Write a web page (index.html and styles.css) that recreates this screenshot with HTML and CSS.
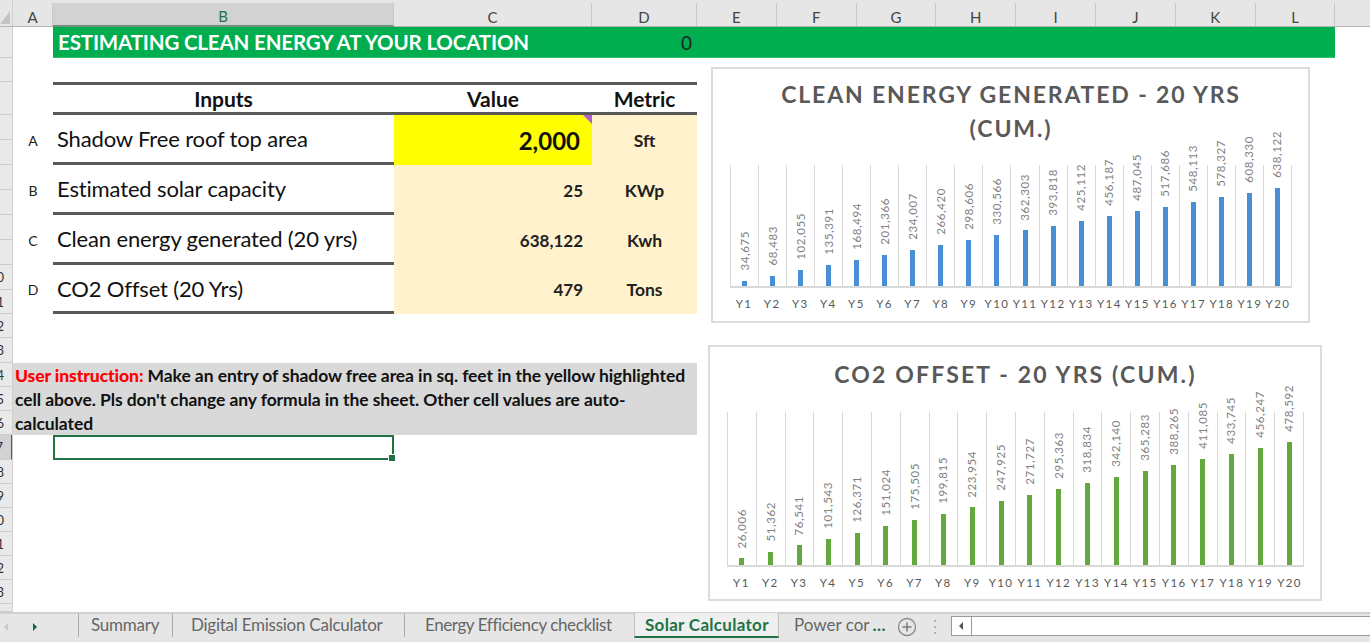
FILE: index.html
```html
<!DOCTYPE html>
<html lang="en">
<head>
<meta charset="utf-8">
<title>Solar Calculator</title>
<link rel="stylesheet" href="styles.css">
</head>
<body>
<div class="app">
  <div class="colhead">
    <div class="corner"><svg width="13" height="27" viewBox="0 0 13 27"><path d="M0 24H10V11Z" fill="#c4c4c4"/></svg></div>
    <div class="col a">A</div><div class="col b active">B</div><div class="col c">C</div><div class="col d">D</div>
    <div class="col e">E</div><div class="col e">F</div><div class="col e">G</div><div class="col e">H</div>
    <div class="col e">I</div><div class="col e">J</div><div class="col e">K</div><div class="col e">L</div><div class="col rest"></div>
  </div>
  <div class="body">
    <div class="gutter">
      <div class="rw h31"></div><div class="rw h24"></div><div class="rw h33"></div>
      <div class="rw h25"></div><div class="rw h25"></div><div class="rw h25"></div><div class="rw h25"></div><div class="rw h25"></div><div class="rw h25"></div>
      <div class="rw h25"><span>10</span></div><div class="rw h24"><span>11</span></div><div class="rw h24"><span>12</span></div><div class="rw h25"><span>13</span></div>
      <div class="rw h24"><span>14</span></div><div class="rw h24"><span>15</span></div><div class="rw h24"><span>16</span></div><div class="rw h25 sel"><span>17</span></div>
      <div class="rw h24"><span>18</span></div><div class="rw h24"><span>19</span></div><div class="rw h24"><span>20</span></div><div class="rw h24"><span>21</span></div><div class="rw h24"><span>22</span></div><div class="rw h24"><span>23</span></div>
      <div class="rw h8"></div>
    </div>
    <div class="sheet">
      <div class="banner"><span>ESTIMATING CLEAN ENERGY AT YOUR LOCATION</span><span class="zero">0</span></div>
      <div class="table">
        <div class="th first">Inputs</div><div class="th">Value</div><div class="th">Metric</div>
        <div class="key">A</div><div class="lbl">Shadow Free roof top area</div><div class="val input">2,000</div><div class="met">Sft</div>
        <div class="key">B</div><div class="lbl">Estimated solar capacity</div><div class="val">25</div><div class="met">KWp</div>
        <div class="key">C</div><div class="lbl">Clean energy generated (20 yrs)</div><div class="val">638,122</div><div class="met">Kwh</div>
        <div class="key">D</div><div class="lbl">CO2 Offset (20 Yrs)</div><div class="val">479</div><div class="met">Tons</div>
      </div>
      <div class="note"><b class="red">User instruction:</b> Make an entry of shadow free area in sq. feet in the yellow highlighted<br>cell above. Pls don't change any formula in the sheet. Other cell values are auto-<br>calculated</div>
      <div class="cursor"></div>

      <section class="chart one">
        <h2>CLEAN ENERGY GENERATED - 20 YRS<br>(CUM.)</h2>
        <div class="plot">
          <div class="cat"><i>34,675</i><u style="height:5.3px"></u></div><div class="cat"><i>68,483</i><u style="height:10.5px"></u></div><div class="cat"><i>102,055</i><u style="height:15.7px"></u></div><div class="cat"><i>135,391</i><u style="height:20.8px"></u></div><div class="cat"><i>168,494</i><u style="height:25.9px"></u></div>
          <div class="cat"><i>201,366</i><u style="height:30.9px"></u></div><div class="cat"><i>234,007</i><u style="height:35.9px"></u></div><div class="cat"><i>266,420</i><u style="height:40.9px"></u></div><div class="cat"><i>298,606</i><u style="height:45.9px"></u></div><div class="cat"><i>330,566</i><u style="height:50.8px"></u></div>
          <div class="cat"><i>362,303</i><u style="height:55.6px"></u></div><div class="cat"><i>393,818</i><u style="height:60.5px"></u></div><div class="cat"><i>425,112</i><u style="height:65.3px"></u></div><div class="cat"><i>456,187</i><u style="height:70.1px"></u></div><div class="cat"><i>487,045</i><u style="height:74.8px"></u></div>
          <div class="cat"><i>517,686</i><u style="height:79.5px"></u></div><div class="cat"><i>548,113</i><u style="height:84.2px"></u></div><div class="cat"><i>578,327</i><u style="height:88.8px"></u></div><div class="cat"><i>608,330</i><u style="height:93.4px"></u></div><div class="cat"><i>638,122</i><u style="height:98px"></u></div>
        </div>
        <div class="xaxis"><span>Y1</span><span>Y2</span><span>Y3</span><span>Y4</span><span>Y5</span><span>Y6</span><span>Y7</span><span>Y8</span><span>Y9</span><span>Y10</span><span>Y11</span><span>Y12</span><span>Y13</span><span>Y14</span><span>Y15</span><span>Y16</span><span>Y17</span><span>Y18</span><span>Y19</span><span>Y20</span></div>
      </section>

      <section class="chart two">
        <h2>CO2 OFFSET - 20 YRS (CUM.)</h2>
        <div class="plot">
          <div class="cat"><i>26,006</i><u style="height:6.7px"></u></div><div class="cat"><i>51,362</i><u style="height:13.2px"></u></div><div class="cat"><i>76,541</i><u style="height:19.7px"></u></div><div class="cat"><i>101,543</i><u style="height:26.1px"></u></div><div class="cat"><i>126,371</i><u style="height:32.5px"></u></div>
          <div class="cat"><i>151,024</i><u style="height:38.8px"></u></div><div class="cat"><i>175,505</i><u style="height:45.1px"></u></div><div class="cat"><i>199,815</i><u style="height:51.4px"></u></div><div class="cat"><i>223,954</i><u style="height:57.6px"></u></div><div class="cat"><i>247,925</i><u style="height:63.7px"></u></div>
          <div class="cat"><i>271,727</i><u style="height:69.8px"></u></div><div class="cat"><i>295,363</i><u style="height:75.9px"></u></div><div class="cat"><i>318,834</i><u style="height:81.9px"></u></div><div class="cat"><i>342,140</i><u style="height:87.9px"></u></div><div class="cat"><i>365,283</i><u style="height:93.9px"></u></div>
          <div class="cat"><i>388,265</i><u style="height:99.8px"></u></div><div class="cat"><i>411,085</i><u style="height:105.7px"></u></div><div class="cat"><i>433,745</i><u style="height:111.5px"></u></div><div class="cat"><i>456,247</i><u style="height:117.3px"></u></div><div class="cat"><i>478,592</i><u style="height:123px"></u></div>
        </div>
        <div class="xaxis"><span>Y1</span><span>Y2</span><span>Y3</span><span>Y4</span><span>Y5</span><span>Y6</span><span>Y7</span><span>Y8</span><span>Y9</span><span>Y10</span><span>Y11</span><span>Y12</span><span>Y13</span><span>Y14</span><span>Y15</span><span>Y16</span><span>Y17</span><span>Y18</span><span>Y19</span><span>Y20</span></div>
      </section>
    </div>
  </div>
  <div class="tabs">
    <div class="nav">
      <svg class="arrow" width="6" height="10" viewBox="0 0 6 10"><path d="M5 1V9L1 5Z" fill="#c8c8c8"/></svg>
      <svg class="arrow" width="6" height="10" viewBox="0 0 6 10"><path d="M1 1V9L5 5Z" fill="#0f6b3a"/></svg>
    </div>
    <div class="tab t1">Summary</div>
    <div class="tab t2">Digital Emission Calculator</div>
    <div class="tab t3">Energy Efficiency checklist</div>
    <div class="tab current">Solar Calculator</div>
    <div class="tab t5">Power cor <b>...</b></div>
    <svg class="plus" width="20" height="20" viewBox="0 0 20 20"><circle cx="10" cy="10" r="8.5" fill="none" stroke="#8a8a8a" stroke-width="1.3"/><path d="M10 5.5V14.5M5.500 10H14.500" stroke="#7a7a7a" stroke-width="1.500"/></svg>
    <svg class="dots" width="4" height="16" viewBox="0 0 4 16"><path d="M2 1V3M2 7V9M2 13V15" stroke="#b0b0b0" stroke-width="2"/></svg>
    <div class="scroll">
      <div class="scrollbtn"><svg width="5" height="8" viewBox="0 0 5 8"><path d="M4 0V8L0 4Z" fill="#555"/></svg></div>
    </div>
  </div>
</div>
</body>
</html>
```

FILE: styles.css
```css
* { box-sizing: border-box; }
html, body { margin: 0; padding: 0; }
body { background: #fff; font-family: Lato, "Liberation Sans", sans-serif; overflow: hidden; }
.app { width: 1370px; height: 642px; display: flex; flex-direction: column; overflow: hidden; }

.colhead { height: 27px; flex: none; display: flex; background: #e6e6e6; border-bottom: 1px solid #b4b4b4; padding-top: 3px; }
.corner { width: 13px; margin-top: -3px; border-right: 1px solid #d0d0d0; }
.col { display: flex; align-items: center; justify-content: center; padding-top: 4px; font-size: 15px; color: #444; border-right: 1px solid #c8c8c8; }
.col.a { width: 40px; }
.col.b { width: 341px; }
.col.c { width: 198px; }
.col.d { width: 105px; }
.col.e { width: 79.800px; }
.col.rest { flex: 1; border: 0; }
.col.active { background: #d2d2d2; color: #217346; border-bottom: 2px solid #6f8f7f; margin-bottom: -1px; }

.body { flex: 1; min-height: 0; display: flex; }
.gutter { width: 13px; flex: none; background: #e9e9e9; border-right: 1px solid #cfcfcf; overflow: hidden; }
.rw { display: flex; align-items: center; justify-content: flex-end; padding-right: 8px; border-bottom: 1px solid #cdcdcd; font-size: 13px; color: #333; white-space: nowrap; }
.rw span { flex: none; }
.rw.sel { background: #d2d2d2; border-right: 2px solid #217346; margin-right: -1px; }
.h8 { height: 8px; } .h24 { height: 24px; } .h25 { height: 25px; } .h31 { height: 31px; } .h33 { height: 33px; }

.sheet { position: relative; flex: 1; min-width: 0; }
.banner { margin-left: 40px; width: 1282px; height: 31px; background: #00ae50; display: flex; align-items: center; justify-content: space-between; padding: 0 643px 0 5px; color: #fff; font-weight: 700; font-size: 20.500px; letter-spacing: -0.15px; border-bottom: 1px solid #2bc46e; }
.zero { color: #222; font-weight: 400; font-size: 19px; letter-spacing: 0; }

.table { margin: 24px 0 0 0; display: grid; grid-template-columns: 40px 341px 198px 105px; grid-template-rows: 33px 50px 50px 50px 49px; }
.th { display: flex; align-items: center; justify-content: center; font-weight: 700; font-size: 21px; letter-spacing: 0; color: #111; border-top: 3px solid #595959; border-bottom: 3px solid #595959; }
.th.first { grid-column: 2; }
.key { display: flex; align-items: center; justify-content: center; font-size: 14px; color: #222; }
.lbl { display: flex; align-items: center; padding-left: 4px; font-size: 22px; letter-spacing: -0.15px; color: #111; border-bottom: 3px solid #595959; }
.val { display: flex; align-items: center; justify-content: flex-end; padding-right: 9px; background: #fff2cc; font-weight: 700; font-size: 17px; letter-spacing: 0; color: #222; }
.met { display: flex; align-items: center; justify-content: center; background: #fff2cc; font-weight: 700; font-size: 17.500px; letter-spacing: 0; color: #222; }
.val.input { position: relative; background: #ffff00; font-size: 24px; padding-right: 12px; color: #111; }
.val.input::after { content: ""; position: absolute; top: 0; right: 0; border-top: 9px solid #b45fd0; border-left: 9px solid transparent; }

.note { margin-top: 49px; width: 684px; height: 72px; background: #d9d9d9; padding: 1px 0 0 2px; font-weight: 700; font-size: 17.500px; line-height: 24px; letter-spacing: -0.08px; color: #111; white-space: nowrap; }
.red { color: #ff0000; }
.cursor { position: relative; margin-left: 40px; width: 341px; height: 25px; border: 2px solid #217346; }
.cursor::after { content: ""; position: absolute; right: -4px; bottom: -4px; width: 6px; height: 6px; background: #217346; border: 1px solid #fff; }

.chart { position: absolute; background: #fff; border: 2px solid #dcdcdc; display: flex; flex-direction: column; }
.chart.one { left: 698px; top: 40px; width: 599px; height: 256px; padding: 8px 16px 0 17px; }
.chart.two { left: 695px; top: 318px; width: 614px; height: 256px; padding: 10px 16px 0 17px; }
.chart h2 { margin: 0; text-align: center; color: #595959; font-weight: 700; font-size: 23px; line-height: 34px; }
.chart.one h2 { height: 88px; letter-spacing: 1.85px; }
.chart.two h2 { height: 55px; letter-spacing: 2.150px; }
.plot { display: grid; grid-template-columns: repeat(20, 1fr); grid-template-rows: minmax(0, 1fr); border-bottom: 2px solid #d9d9d9; border-right: 1px solid #d9d9d9; }
.chart.one .plot { height: 123px; flex: none; }
.chart.two .plot { height: 155px; flex: none; }
.cat { display: flex; flex-direction: column; align-items: center; justify-content: flex-end; border-left: 1px solid #d9d9d9; min-width: 0; min-height: 0; }
.cat i { font-style: normal; writing-mode: vertical-rl; transform: rotate(180deg); font-size: 11.500px; line-height: 12px; letter-spacing: 0.6px; color: #7f7f7f; margin-bottom: 10px; flex: none; white-space: nowrap; }
.cat u { display: block; width: 5px; flex: none; text-decoration: none; }
.one .cat u { background: #4a8fd6; }
.two .cat u { background: #62a83c; }
.xaxis { display: grid; grid-template-columns: repeat(20, 1fr); margin-top: 9px; }
.xaxis span { text-align: center; font-size: 11.500px; line-height: 14px; letter-spacing: 1.4px; color: #595959; white-space: nowrap; }

.tabs { height: 30px; flex: none; background: #e6e6e6; border-top: 2px solid #d0d0d0; display: flex; align-items: stretch; font-size: 17px; letter-spacing: -0.25px; color: #666; position: relative; }
.nav { width: 78px; display: flex; align-items: center; padding: 0 0 3px 3px; gap: 23px; }
.tab { display: flex; align-items: center; height: 23px; margin-top: 0; padding-bottom: 3px; white-space: nowrap; border-left: 1px solid #aaa; }
.t1 { width: 94px; padding-left: 12px; }
.t2 { width: 232px; padding-left: 18px; }
.t3 { width: 230px; padding-left: 20px; letter-spacing: -0.4px; }
.tab.current { width: 145px; height: 25px; margin-top: -1px; padding: 0 0 1px 10px; background: #efefef; border-left: 1px solid #c0c0c0; border-right: 1px solid #c0c0c0; border-bottom: 2px solid #217346; color: #217346; font-weight: 700; letter-spacing: 0.3px; }
.t5 { width: 110px; padding-left: 15px; border: 0; letter-spacing: 0; }
.t5 b { color: #217346; margin-left: 3px; letter-spacing: 0.5px; }
.plus { margin: 0 0 3px 8px; align-self: center; }
.dots { margin: 0 0 3px 16px; align-self: center; }
.scroll { margin: 2px 0 6px 14px; flex: 1; background: #fff; border: 1px solid #9a9a9a; border-right: 0; }
.scrollbtn { width: 20px; height: 100%; display: flex; align-items: center; justify-content: center; border-right: 1px solid #9a9a9a; }
```
